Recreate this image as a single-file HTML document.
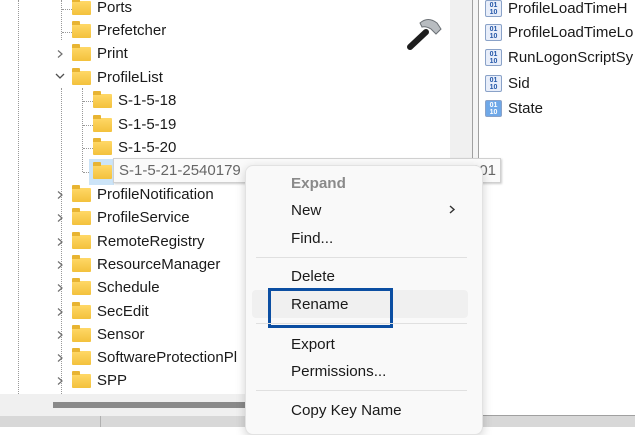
<!DOCTYPE html>
<html><head><style>
*{margin:0;padding:0;box-sizing:border-box}
body{width:635px;height:427px;overflow:hidden;background:#fff;font-family:"Liberation Sans",sans-serif;font-size:15px;color:#1a1a1a;position:relative}
.a{position:absolute;white-space:nowrap}
.f{position:absolute;width:19px;height:14px;background:linear-gradient(#ffd867,#f3c13c);border-radius:1px}
.f:before{content:"";position:absolute;left:0;top:-3px;width:8px;height:4px;background:#e8b432;border-radius:1px 1px 0 0}
.ch{position:absolute;left:56px;width:8px;height:10px}
.mi{position:absolute;left:291px;font-size:15.2px;color:#1a1a1a}
.sep{position:absolute;left:256px;width:211px;height:1px;background:#e0e0e0}
.ri{position:absolute;left:485px;width:17px;height:17px;border:1px solid #8aa2c8;background:#e8eefa;border-radius:2px;font-size:7px;line-height:7px;color:#2457a8;font-weight:bold;text-align:center;padding-top:1px}
</style></head><body>
<svg width="0" height="0" style="position:absolute"><defs><symbol id="cv" viewBox="0 0 8 10"><path d="M2 1.5 L6 5 L2 8.5" fill="none" stroke="#707070" stroke-width="1.2"/></symbol></defs></svg>
<div class="a" style="left:450px;top:0;width:22px;height:394px;background:#f0f0f0"></div>
<div class="a" style="left:472px;top:0;width:1px;height:416px;background:#a0a0a0"></div>
<div class="a" style="left:478px;top:0;width:1px;height:416px;background:#a0a0a0"></div>
<div class="a" style="left:473px;top:0;width:5px;height:416px;background:#f4f4f4"></div>
<div class="a" style="left:0;top:394px;width:472px;height:22px;background:#f0f0f0"></div>
<div class="a" style="left:53px;top:402px;width:192px;height:6px;background:#8a8a8a"></div>
<div class="a" style="left:0;top:416px;width:635px;height:11px;background:#d8d8d8"></div>
<div class="a" style="left:100px;top:416px;width:1px;height:11px;background:#b0b0b0"></div>
<div class="a" style="left:479px;top:415px;width:156px;height:1px;background:#a0a0a0"></div>
<div class="a" style="left:18px;top:0;height:394px;border-left:1px dotted #999"></div>
<div class="a" style="left:61px;top:0;height:40px;border-left:1px dotted #999"></div>
<div class="a" style="left:61px;top:88px;height:306px;border-left:1px dotted #999"></div>
<div class="a" style="left:82px;top:88px;height:84px;border-left:1px dotted #999"></div>
<div class="a" style="left:62px;top:9px;width:10px;border-top:1px dotted #999"></div>
<div class="a" style="left:62px;top:32px;width:10px;border-top:1px dotted #999"></div>
<div class="a" style="left:83px;top:101px;width:10px;border-top:1px dotted #999"></div>
<div class="a" style="left:83px;top:125px;width:10px;border-top:1px dotted #999"></div>
<div class="a" style="left:83px;top:148px;width:10px;border-top:1px dotted #999"></div>
<div class="a" style="left:83px;top:172px;width:10px;border-top:1px dotted #999"></div>

<div class="f" style="left:72px;top:1px"></div><div class="a" style="left:97px;top:-1px">Ports</div>
<div class="f" style="left:72px;top:24px"></div><div class="a" style="left:97px;top:22px">Prefetcher</div>
<svg class="ch" style="top:49px"><use href="#cv"/></svg><div class="f" style="left:72px;top:47px"></div><div class="a" style="left:97px;top:45px">Print</div>
<svg class="ch" style="left:55px;top:72px;width:10px;height:8px" viewBox="0 0 10 8"><path d="M1 2 L5 6 L9 2" fill="none" stroke="#505050" stroke-width="1.3"/></svg><div class="f" style="left:72px;top:71px"></div><div class="a" style="left:97px;top:69px">ProfileList</div>
<div class="f" style="left:93px;top:94px"></div><div class="a" style="left:118px;top:92px">S-1-5-18</div>
<div class="f" style="left:93px;top:118px"></div><div class="a" style="left:118px;top:116px">S-1-5-19</div>
<div class="f" style="left:93px;top:141px"></div><div class="a" style="left:118px;top:139px">S-1-5-20</div>
<div class="a" style="left:89px;top:159px;width:25px;height:26px;background:#cce4f7"></div>
<div class="f" style="left:93px;top:165px"></div>
<div class="a" style="left:113px;top:158px;width:388px;height:25px;background:#fafafa;border:1px solid #d0d0d0;box-shadow:1px 1px 2px rgba(0,0,0,.2);color:#666;padding:3px 5px">S-1-5-21-2540179<span style="position:absolute;left:357px">001</span></div>
<svg class="ch" style="top:190px"><use href="#cv"/></svg><div class="f" style="left:72px;top:188px"></div><div class="a" style="left:97px;top:186px">ProfileNotification</div>
<svg class="ch" style="top:213px"><use href="#cv"/></svg><div class="f" style="left:72px;top:211px"></div><div class="a" style="left:97px;top:209px">ProfileService</div>
<svg class="ch" style="top:237px"><use href="#cv"/></svg><div class="f" style="left:72px;top:235px"></div><div class="a" style="left:97px;top:233px">RemoteRegistry</div>
<svg class="ch" style="top:260px"><use href="#cv"/></svg><div class="f" style="left:72px;top:258px"></div><div class="a" style="left:97px;top:256px">ResourceManager</div>
<svg class="ch" style="top:283px"><use href="#cv"/></svg><div class="f" style="left:72px;top:281px"></div><div class="a" style="left:97px;top:279px">Schedule</div>
<svg class="ch" style="top:307px"><use href="#cv"/></svg><div class="f" style="left:72px;top:305px"></div><div class="a" style="left:97px;top:303px">SecEdit</div>
<svg class="ch" style="top:330px"><use href="#cv"/></svg><div class="f" style="left:72px;top:328px"></div><div class="a" style="left:97px;top:326px">Sensor</div>
<svg class="ch" style="top:353px"><use href="#cv"/></svg><div class="f" style="left:72px;top:351px"></div><div class="a" style="left:97px;top:349px">SoftwareProtectionPl</div>
<svg class="ch" style="top:376px"><use href="#cv"/></svg><div class="f" style="left:72px;top:374px"></div><div class="a" style="left:97px;top:372px">SPP</div>

<svg class="a" style="left:403px;top:14px" width="40" height="38" viewBox="0 0 40 38">
<path d="M7 33 L23 18" stroke="#1e1e1e" stroke-width="6" stroke-linecap="round"/>
<path d="M17 9 Q25 2 34 9 L38 15 L33 20 L28 15 Q23 12 19 13 Z" fill="#b8bcc0" stroke="#6b7075" stroke-width="1"/>
</svg>

<div class="ri" style="top:0px">01<br>10</div><div class="a" style="left:508px;top:0px">ProfileLoadTimeH</div>
<div class="ri" style="top:24px">01<br>10</div><div class="a" style="left:508px;top:24px">ProfileLoadTimeLo</div>
<div class="ri" style="top:49px">01<br>10</div><div class="a" style="left:508px;top:49px">RunLogonScriptSy</div>
<div class="ri" style="top:75px">01<br>10</div><div class="a" style="left:508px;top:75px">Sid</div>
<div class="ri" style="top:100px;background:#6fa8e8;color:#fff">01<br>10</div><div class="a" style="left:508px;top:100px">State</div>

<div class="a" style="left:245px;top:165px;width:238px;height:270px;background:#f9f9f9;border:1px solid #e2e2e2;border-radius:8px;box-shadow:0 3px 10px rgba(0,0,0,.18)"></div>
<div class="mi" style="top:175px;color:#8a8a8a;font-weight:bold">Expand</div>
<div class="mi" style="top:202px">New</div><svg class="a" style="left:448px;top:204px" width="8" height="11" viewBox="0 0 8 10"><path d="M2 1.5 L6 5 L2 8.5" fill="none" stroke="#333" stroke-width="1.4"/></svg>
<div class="mi" style="top:230px">Find...</div>
<div class="sep" style="top:257px"></div>
<div class="mi" style="top:268px">Delete</div>
<div class="a" style="left:252px;top:290px;width:216px;height:28px;background:#f0f0f0;border-radius:4px"></div>
<div class="mi" style="top:296px">Rename</div>
<div class="a" style="left:268px;top:288px;width:125px;height:40px;border:3px solid #0b4ea2"></div>
<div class="sep" style="top:323px"></div>
<div class="mi" style="top:336px">Export</div>
<div class="mi" style="top:363px">Permissions...</div>
<div class="sep" style="top:390px"></div>
<div class="mi" style="top:402px">Copy Key Name</div>
</body></html>
